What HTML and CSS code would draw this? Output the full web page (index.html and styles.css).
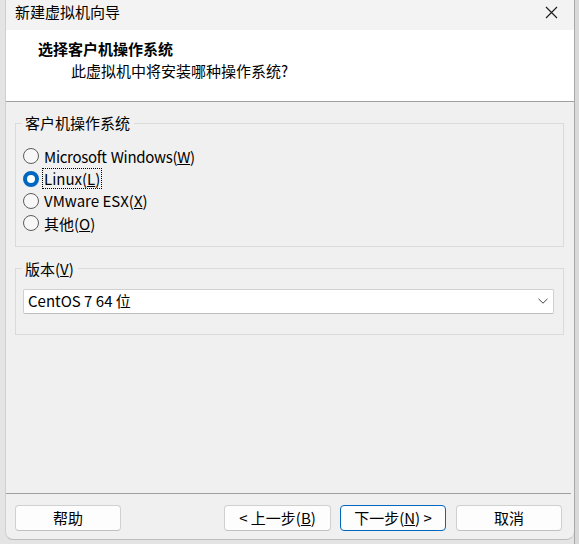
FILE: index.html
```html
<!DOCTYPE html>
<html lang="zh-CN">
<head>
<meta charset="utf-8">
<title>新建虚拟机向导</title>
<link rel="stylesheet" href="styles.css">
</head>
<body>
<div class="desktop">
  <div class="window">
    <div class="titlebar">
      <span class="title">新建虚拟机向导</span>
      <svg class="close" width="13" height="13" viewBox="0 0 13 13"><path d="M1 1L12 12M12 1L1 12" stroke="#1a1a1a" stroke-width="1.1" fill="none"/></svg>
    </div>
    <div class="header">
      <div class="h-title">选择客户机操作系统</div>
      <div class="h-sub">此虚拟机中将安装哪种操作系统?</div>
    </div>
    <div class="content">
      <fieldset class="group group-os">
        <legend>客户机操作系统</legend>
        <div class="radio"><span class="dot"></span><span class="label label-narrow">Microsoft Windows(<u>W</u>)</span></div>
        <div class="radio checked"><span class="dot"></span><span class="label focus">Linux(<u>L</u>)</span></div>
        <div class="radio"><span class="dot"></span><span class="label">VMware ESX(<u>X</u>)</span></div>
        <div class="radio"><span class="dot"></span><span class="label">其他(<u>O</u>)</span></div>
      </fieldset>
      <fieldset class="group group-ver">
        <legend>版本(<u>V</u>)</legend>
        <div class="combo">
          <span class="combo-text">CentOS 7 64 位</span>
          <svg class="chev" width="10" height="6" viewBox="0 0 10 6"><path d="M0.5 0.8L5 5.2L9.5 0.8" stroke="#444" stroke-width="1" fill="none"/></svg>
        </div>
      </fieldset>
    </div>
    <div class="footer">
      <div class="btn help">帮助</div>
      <div class="btn back">&lt; 上一步(<u>B</u>)</div>
      <div class="btn default">下一步(<u>N</u>) &gt;</div>
      <div class="btn">取消</div>
    </div>
  </div>
  <div class="edge"></div>
</div>
</body>
</html>
```
FILE: styles.css
```css
html, body {
  margin: 0;
  padding: 0;
}
body {
  background: #e4e4e4;
  font-family: "Noto Sans CJK SC", "Noto Sans", sans-serif;
  font-size: 15px;
  color: #000;
}
.desktop {
  display: flex;
  width: 579px;
  height: 544px;
  padding-left: 5px;
  box-sizing: border-box;
}
.window {
  width: 569px;
  height: 540px;
  display: flex;
  flex-direction: column;
  background: #f0f0f0;
  border-left: 1px solid #cfcfcf;
  border-bottom: 1px solid #bcbcbc;
  border-radius: 0 0 8px 8px;
  box-sizing: border-box;
  overflow: hidden;
}
.edge {
  flex: 1;
  background: #d9d9d9;
  border-left: 1px solid #a9a9a9;
}
.titlebar {
  height: 30px;
  flex: none;
  background: #f3f3f3;
  display: flex;
  align-items: center;
  justify-content: space-between;
  padding: 0 16px 6px 9px;
  box-sizing: border-box;
}
.title {
  font-size: 15px;
  line-height: 20px;
}
.close {
  display: block;
}
.header {
  flex: none;
  height: 71px;
  background: #fff;
  border-bottom: 1px solid #a0a0a0;
}
.h-title {
  font-weight: bold;
  line-height: 20px;
  padding: 9px 0 0 32px;
}
.h-sub {
  line-height: 20px;
  padding: 2px 0 0 65px;
}
.content {
  flex: 1;
  display: flex;
  flex-direction: column;
  padding: 0 10px 0 9px;
}
.group {
  margin: 0;
  border: 1px solid #dadada;
  padding: 0 8px 0 7px;
  min-width: 0;
}
.group legend {
  padding: 0 4px 0 3px;
  margin-left: -1px;
  line-height: 20px;
  height: 20px;
}
.group-os {
  margin-top: 11px;
  padding-top: 12px;
  padding-bottom: 11px;
}
.group-ver {
  margin-top: 12px;
  padding-top: 10px;
  padding-bottom: 20px;
  padding-right: 9px;
}
.radio {
  height: 22.4px;
  display: flex;
  align-items: center;
}
.dot {
  width: 16px;
  height: 16px;
  box-sizing: border-box;
  border: 1px solid #5c5c5c;
  border-radius: 50%;
  background: #f7f7f7;
  flex: none;
  margin-right: 3px;
}
.radio.checked .dot {
  border: 4.5px solid #0067c0;
  background: #fff;
}
.label {
  line-height: 19px;
  height: 19px;
  padding: 0 1px;
  border: 1px dotted transparent;
}
.label-narrow {
  letter-spacing: -0.3px;
  word-spacing: 1px;
}
.label.focus {
  border-color: #000;
}
.combo {
  height: 25px;
  box-sizing: border-box;
  background: #fff;
  border: 1px solid #d0d0d0;
  border-bottom-color: #bdbdbd;
  border-radius: 2px;
  display: flex;
  align-items: center;
  justify-content: space-between;
  padding: 0 5px 0 4px;
}
.combo-text {
  line-height: 20px;
}
.chev {
  display: block;
}
.footer {
  flex: none;
  height: 46px;
  box-sizing: border-box;
  margin: 0 3px 0 0;
  border-top: 1px solid #a0a0a0;
  display: flex;
  align-items: flex-start;
  padding: 11px 9px 0 9px;
}
.btn {
  width: 106px;
  height: 26px;
  box-sizing: border-box;
  background: #fdfdfd;
  border: 1px solid #d0d0d0;
  border-bottom-color: #c0c0c0;
  border-radius: 4px;
  display: flex;
  align-items: center;
  justify-content: center;
  line-height: 20px;
}
.btn.back {
  margin-left: auto;
  margin-right: 9px;
  width: 107px;
}
.btn.default {
  border: 1px solid #0067c0;
  margin-right: 10px;
}
```
